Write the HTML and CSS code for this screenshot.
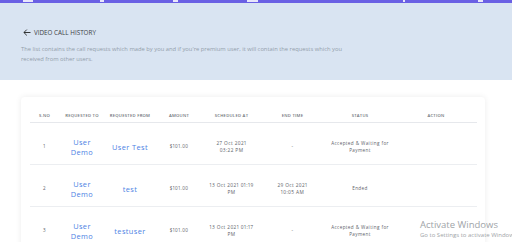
FILE: index.html
```html
<!DOCTYPE html>
<html lang="en">
<head>
    <meta charset="UTF-8">
    <title>Video Call History</title>
    <link rel="stylesheet" href="styles.css">
</head>
<body>
    <div class="topbar">
        <span class="nav-mark" style="margin-left: 23px; width: 10px;"></span>
        <span class="nav-mark" style="margin-left: 67px; width: 4px;"></span>
        <span class="nav-mark" style="margin-left: 69px; width: 5px;"></span>
        <span class="nav-mark" style="margin-left: 69px; width: 11px;"></span>
        <span class="nav-mark" style="margin-left: 145px; width: 2px;"></span>
        <span class="nav-mark" style="margin-left: 73px; width: 5px;"></span>
    </div>

    <div class="banner">
        <h1 class="page-title">
            <svg class="back-arrow" width="8" height="7" viewBox="0 0 8 7">
                <path d="M7.5 3.5H1 M3.8 0.6L0.9 3.5L3.8 6.4" fill="none" stroke="#222" stroke-width="0.9"/>
            </svg>
            Video Call History
        </h1>
        <p class="page-desc">The list contains the call requests which made by you and if you're premium user, it will contain the requests which you received from other users.</p>
    </div>

    <div class="content">
        <div class="card">
            <table class="history">
                <thead>
                    <tr>
                        <th class="col-sno">S.No</th>
                        <th class="col-to">Requested To</th>
                        <th class="col-from">Requested From</th>
                        <th class="col-amount">Amount</th>
                        <th class="col-sched">Scheduled At</th>
                        <th class="col-end">End Time</th>
                        <th class="col-status">Status</th>
                        <th class="col-action">Action</th>
                    </tr>
                </thead>
                <tbody>
                    <tr>
                        <td>1</td>
                        <td class="user">User Demo</td>
                        <td class="user">User Test</td>
                        <td>$101.00</td>
                        <td class="date">27 Oct 2021<br>03:22 PM</td>
                        <td class="date end">-</td>
                        <td class="status">Accepted &amp; Waiting for Payment</td>
                        <td></td>
                    </tr>
                    <tr>
                        <td>2</td>
                        <td class="user">User Demo</td>
                        <td class="user">test</td>
                        <td>$101.00</td>
                        <td class="date">13 Oct 2021 01:19 PM</td>
                        <td class="date end">29 Oct 2021 10:05 AM</td>
                        <td class="status">Ended</td>
                        <td></td>
                    </tr>
                    <tr>
                        <td>3</td>
                        <td class="user">User Demo</td>
                        <td class="user">testuser</td>
                        <td>$101.00</td>
                        <td class="date">13 Oct 2021 01:17 PM</td>
                        <td class="date end">-</td>
                        <td class="status">Accepted &amp; Waiting for Payment</td>
                        <td></td>
                    </tr>
                </tbody>
            </table>
        </div>
    </div>

    <div class="watermark">
        <div class="wm-title">Activate Windows</div>
        <div class="wm-sub">Go to Settings to activate Windows.</div>
    </div>
</body>
</html>
```

FILE: styles.css
```css
body {
    margin: 0;
    padding: 0;
    font-family: "Open Sans", sans-serif;
    background-color: #fff;
    height: 242px;
    overflow: hidden;
}

.topbar {
    height: 3px;
    background-color: #6a60e4;
    display: flex;
    align-items: flex-start;
}

.nav-mark {
    display: block;
    height: 2px;
    background-color: #e8e6fb;
}

.banner {
    background-color: #d9e4f2;
    height: 77px;
    padding: 0 21px;
    box-sizing: border-box;
    overflow: hidden;
}

.page-title {
    margin: 0;
    padding-top: 22px;
    display: flex;
    align-items: center;
    font-size: 6.3px;
    font-weight: 500;
    text-transform: uppercase;
    color: #3b3f45;
    height: 14px;
    box-sizing: content-box;
}

.back-arrow {
    margin-left: 2px;
    margin-right: 3px;
}

.page-desc {
    margin: 5px 0 0 0;
    width: 345px;
    font-size: 5.8px;
    line-height: 10px;
    color: #939eab;
}

.content {
    padding: 17px 27px 0 21px;
}

.card {
    background-color: #fff;
    border-radius: 4px;
    box-shadow: 0 0 6px rgba(0, 0, 0, 0.08);
    padding: 12px 8px 0 9px;
    height: 200px;
    box-sizing: border-box;
}

.history {
    width: 447px;
    border-collapse: collapse;
    table-layout: fixed;
}

.history th {
    height: 13px;
    font-size: 4.2px;
    font-weight: 600;
    text-transform: uppercase;
    letter-spacing: 0.25px;
    color: #6a6f76;
    text-align: center;
    border-bottom: 1.5px solid #e6e8ec;
    padding: 0;
}

.history td {
    height: 35px;
    font-size: 4.6px;
    line-height: 6.6px;
    letter-spacing: 0.4px;
    font-variant-numeric: proportional-nums;
    color: #5d6269;
    text-align: center;
    border-bottom: 1px solid #eceef1;
    padding: 6px 4px 0 4px;
}

.history td.user {
    font-size: 7.4px;
    line-height: 10px;
    letter-spacing: 0.4px;
    color: #4d82e4;
    padding: 6px 2px 0 2px;
}

.history td.date {
    font-size: 4.8px;
    padding: 6px 5.5px 0 5.5px;
}

.history td.date.end {
    padding: 6px 12px 0 12px;
}

.history td.status {
    padding: 6px 5px 0 5px;
}

.col-sno { width: 29px; }
.col-to { width: 46px; }
.col-from { width: 50px; }
.col-amount { width: 48px; }
.col-sched { width: 57px; }
.col-end { width: 65px; }
.col-status { width: 70px; }
.col-action { width: 82px; }

.watermark {
    position: absolute;
    left: 420px;
    top: 218px;
    color: #a0a4a8;
    white-space: nowrap;
}

.wm-title {
    font-size: 9.5px;
    line-height: 13px;
}

.wm-sub {
    font-size: 6px;
    line-height: 8px;
}
```
